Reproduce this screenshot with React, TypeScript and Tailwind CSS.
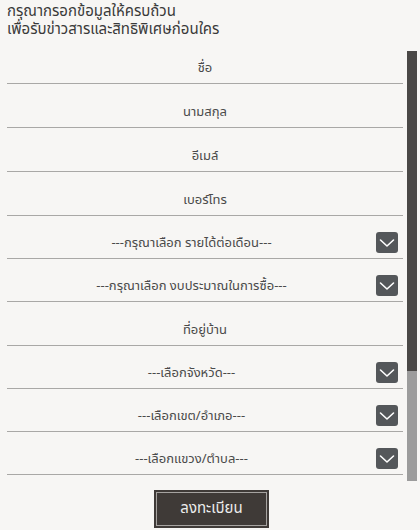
import React from "react";

const font = { fontFamily: '"Noto Sans Thai", "Noto Sans", "DejaVu Sans", sans-serif' };

function Chevron() {
  return (
    <div className="w-[22px] h-[21px] rounded-[3px] bg-[#54575a] flex items-center justify-center">
      <svg width="16" height="10" viewBox="0 0 16 10" fill="none">
        <path d="M1.5 2 L8 8 L14.5 2" stroke="#ffffff" strokeWidth="1.6" strokeLinecap="round" strokeLinejoin="round" />
      </svg>
    </div>
  );
}

function InputRow({ label }: { label: string }) {
  return (
    <div className="h-[44px] border-b border-[#a9a8a6] flex items-end justify-center pb-[5px]">
      <span className="text-[13px] leading-[20px] text-[#4a4a4a]">{label}</span>
    </div>
  );
}

function SelectRow({ label }: { label: string }) {
  return (
    <div className="h-[43px] border-b border-[#a9a8a6] flex items-end pb-[5px]">
      <span className="flex-1 text-center text-[13px] leading-[20px] text-[#4a4a4a]">{label}</span>
      <div className="mr-[5px]">
        <Chevron />
      </div>
    </div>
  );
}

export default function App() {
  return (
    <div className="w-[420px] h-[530px] bg-[#f7f6f4] overflow-hidden" style={font}>
      <div className="pl-[7px] pt-[3px] text-[15px] leading-[18px] text-[#3a3a3a]">
        <div>กรุณากรอกข้อมูลให้ครบถ้วน</div>
        <div>เพื่อรับข่าวสารและสิทธิพิเศษก่อนใคร</div>
      </div>
      <div className="flex mt-[1px]">
        <div className="ml-[7px] w-[396px] flex flex-col">
          <InputRow label="ชื่อ" />
          <InputRow label="นามสกุล" />
          <InputRow label="อีเมล์" />
          <InputRow label="เบอร์โทร" />
          <SelectRow label="---กรุณาเลือก รายได้ต่อเดือน---" />
          <SelectRow label="---กรุณาเลือก งบประมาณในการซื้อ---" />
          <InputRow label="ที่อยู่บ้าน" />
          <SelectRow label="---เลือกจังหวัด---" />
          <SelectRow label="---เลือกเขต/อำเภอ---" />
          <SelectRow label="---เลือกแขวง/ตำบล---" />
          <div className="flex justify-center pt-[15px] pl-[13px]">
            <button className="w-[115px] h-[38px] bg-[#3f3a37] p-[2px]">
              <div className="w-full h-full border border-[#a6a3a0] flex items-center justify-center text-[15px] text-[#ececec]">
                ลงทะเบียน
              </div>
            </button>
          </div>
        </div>
        <div className="ml-[4px] mt-[11px] w-[10px] flex flex-col">
          <div className="h-[320px] bg-[#4a4846]" />
          <div className="h-[110px] bg-[#9c9c9c]" />
        </div>
      </div>
    </div>
  );
}
